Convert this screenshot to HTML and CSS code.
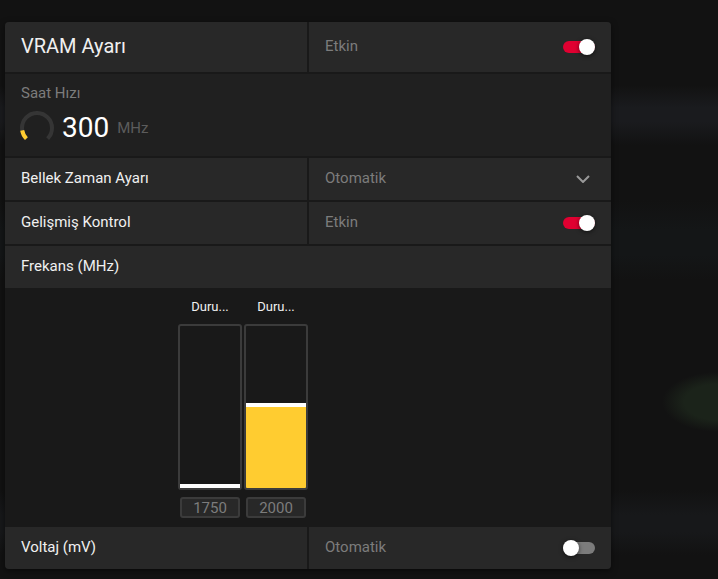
FILE: index.html
```html
<!DOCTYPE html>
<html lang="tr">
<head>
    <meta charset="UTF-8">
    <meta name="viewport" content="width=device-width, initial-scale=1.0">
    <title>VRAM Ayarı</title>
    <link rel="stylesheet" href="styles.css">
</head>
<body>

<main class="panel">
    <div class="row row-header">
        <h1 class="cell"><label for="vram-toggle">VRAM Ayarı</label></h1>
        <div class="cell cell-control">
            <span>Etkin</span>
            <input type="checkbox" class="toggle" id="vram-toggle" checked>
        </div>
    </div>

    <section class="clock">
        <h2>Saat Hızı</h2>
        <div class="clock-reading">
            <svg class="gauge" width="34" height="34" viewBox="0 0 34 34" aria-hidden="true">
                <path class="gauge-track" d="M6.4 27.6A15 15 0 1 1 27.6 27.6"/>
                <path class="gauge-value" d="M6.4 27.6A15 15 0 0 1 2.2 19.4"/>
            </svg>
            <span class="clock-value">300</span>
            <span class="clock-unit">MHz</span>
        </div>
    </section>

    <div class="row">
        <div class="cell"><label for="memory-timing">Bellek Zaman Ayarı</label></div>
        <div class="cell cell-control cell-select">
            <select id="memory-timing">
                <option>Otomatik</option>
            </select>
            <svg class="chevron" width="14" height="8" viewBox="0 0 14 8" aria-hidden="true">
                <path d="M1 1L7 7L13 1"/>
            </svg>
        </div>
    </div>

    <div class="row">
        <div class="cell"><label for="advanced-toggle">Gelişmiş Kontrol</label></div>
        <div class="cell cell-control">
            <span>Etkin</span>
            <input type="checkbox" class="toggle" id="advanced-toggle" checked>
        </div>
    </div>

    <div class="row row-full">
        <div class="cell">Frekans (MHz)</div>
    </div>

    <div class="states">
        <div class="state">
            <label for="state-1">Duru...</label>
            <input type="range" class="state-slider" id="state-1" min="1750" max="2240" value="1750" style="--level: 0%">
            <input type="text" class="state-value" value="1750" aria-label="Frekans 1 (MHz)">
        </div>
        <div class="state">
            <label for="state-2">Duru...</label>
            <input type="range" class="state-slider" id="state-2" min="1750" max="2240" value="2000" style="--level: 51%">
            <input type="text" class="state-value" value="2000" aria-label="Frekans 2 (MHz)">
        </div>
    </div>

    <div class="row">
        <div class="cell"><label for="voltage-toggle">Voltaj (mV)</label></div>
        <div class="cell cell-control">
            <span>Otomatik</span>
            <input type="checkbox" class="toggle" id="voltage-toggle">
        </div>
    </div>
</main>

</body>
</html>
```

FILE: styles.css
```css
* {
    box-sizing: border-box;
}

body {
    margin: 0;
    padding: 22px 107px 10px 5px;
    min-height: 100vh;
    font-family: Roboto, "Noto Sans", sans-serif;
    font-size: 15px;
    line-height: 20px;
    color: #f0f0f0;
    /* dimmed page behind the panel */
    background:
        radial-gradient(ellipse 56px 30px at 100% 402px, #1b231a 60%, transparent 100%),
        linear-gradient(transparent 85px, #1a1b1e 108px, #1a1b1e 122px, transparent 145px),
        linear-gradient(transparent 200px, #141617 230px, #141617 255px, transparent 280px),
        linear-gradient(transparent 490px, #17181a 515px, #17181a 532px, transparent 555px),
        #121212;
}

.panel {
    display: flex;
    flex-direction: column;
    border-radius: 4px;
    overflow: hidden;
    background: #191919;
    box-shadow: 0 2px 6px rgba(0, 0, 0, 0.5);
}

.row {
    display: grid;
    grid-template-columns: 1fr 1fr;
    gap: 2px;
    min-height: 42px;
}

.row + .row {
    margin-top: 2px;
}

.row-header {
    min-height: 50px;
}

.row-full {
    grid-template-columns: 1fr;
}

.cell {
    display: flex;
    align-items: center;
    padding: 0 16px 2px;
    background: #282828;
}

h1 {
    margin: 0;
    font-size: 20px;
    font-weight: 400;
}

.cell-control {
    justify-content: space-between;
    color: #7c7c7c;
}

.toggle {
    appearance: none;
    display: flex;
    align-items: center;
    width: 32px;
    height: 12px;
    margin: 2px 0 0;
    border-radius: 6px;
    background: #7c7c7c;
}

.toggle::before {
    content: "";
    width: 16px;
    height: 16px;
    flex: none;
    border-radius: 50%;
    background: #fff;
    box-shadow: 0 1px 4px rgba(0, 0, 0, 0.6);
}

.toggle:checked {
    justify-content: flex-end;
    background: #e00031;
}

.cell-select {
    display: grid;
    grid-template-columns: 1fr auto;
}

.cell-select select {
    appearance: none;
    grid-area: 1 / 1 / 2 / 3;
    padding: 0;
    border: 0;
    background: transparent;
    color: inherit;
    font: inherit;
}

.chevron {
    grid-area: 1 / 2;
    margin: 2px 5px 0 0;
    fill: none;
    stroke: #999;
    stroke-width: 2;
    pointer-events: none;
}

.clock {
    margin: 2px 0;
    padding: 9px 16px 11px;
    background: #202020;
    color: #7c7c7c;
}

.clock h2 {
    margin: 0;
    font-size: 15px;
    font-weight: 400;
}

.clock-reading {
    display: flex;
    align-items: center;
    margin: 8px 0 0 -1px;
}

.gauge {
    fill: none;
    stroke-width: 4;
}

.gauge-track {
    stroke: #353535;
}

.gauge-value {
    stroke: #ffcc30;
}

.clock-value {
    margin-left: 8px;
    font-size: 28px;
    color: #fff;
}

.clock-unit {
    margin-left: 8px;
    color: #5c5c5c;
}

.states {
    display: flex;
    justify-content: flex-end;
    gap: 2px;
    width: 50%;
    padding: 9px 0;
}

.state {
    display: flex;
    flex-direction: column;
    align-items: center;
    width: 64px;
}

.state label {
    font-size: 13px;
}

.state-slider {
    appearance: none;
    writing-mode: vertical-lr;
    direction: rtl;
    width: 64px;
    height: 166px;
    margin: 7px 0;
    border: 2px solid #3b3b3b;
    border-radius: 3px;
    background: linear-gradient(to top, #ffcc30 var(--level), transparent var(--level));
}

.state-slider::-webkit-slider-thumb {
    appearance: none;
    width: 60px;
    height: 4px;
    background: #fff;
}

.state-value {
    width: 60px;
    height: 21px;
    padding: 0;
    border: 2px solid #3b3b3b;
    border-radius: 3px;
    background: #282828;
    color: #7c7c7c;
    font: inherit;
    text-align: center;
}
```
